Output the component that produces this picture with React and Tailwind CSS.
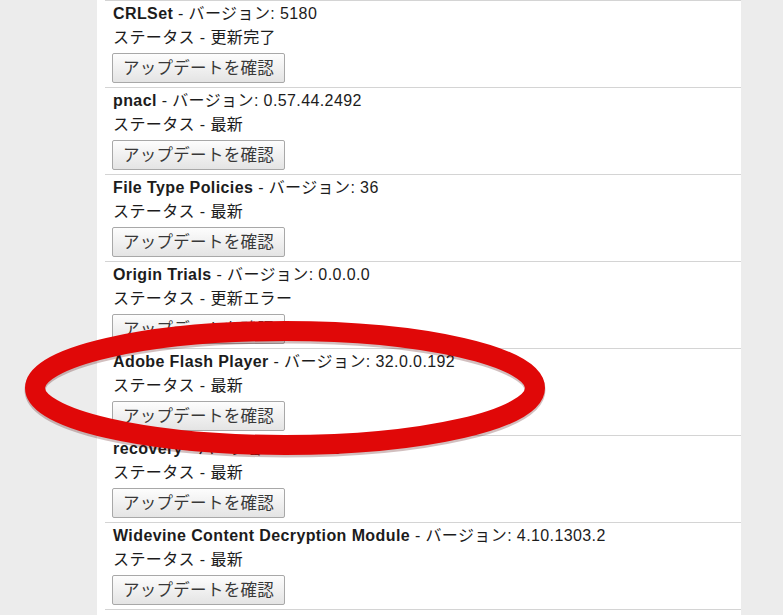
import React from "react";

const components = [
  { name: "CRLSet", version: "5180", status: "更新完了" },
  { name: "pnacl", version: "0.57.44.2492", status: "最新" },
  { name: "File Type Policies", version: "36", status: "最新" },
  { name: "Origin Trials", version: "0.0.0.0", status: "更新エラー" },
  { name: "Adobe Flash Player", version: "32.0.0.192", status: "最新" },
  { name: "recovery", version: "0.0.0.0", status: "最新" },
  { name: "Widevine Content Decryption Module", version: "4.10.1303.2", status: "最新" },
];

const ComponentRow = ({ item }) => (
  <div className="ml-2 border-t border-[#d4d4d4] pt-px pl-2 pb-[4px]">
    <div className="h-[24px] leading-[24px] whitespace-nowrap">
      <span className="font-bold">{item.name}</span>
      <span> - バージョン: {item.version}</span>
    </div>
    <div className="h-[24px] leading-[24px]">ステータス - {item.status}</div>
    {/* Check button */}
    <button className="mt-[3px] h-[30px] w-[173px] -ml-[1px] rounded-[2px] border border-[#a8a8a8] bg-gradient-to-b from-[#fdfdfd] to-[#e4e4e4] text-[16.5px] text-[#383838] tracking-[0.3px]">
      アップデートを確認
    </button>
  </div>
);

export default function App() {
  return (
    <div
      className="relative flex h-[615px] w-[783px] overflow-hidden bg-[#ececec] text-[16px] tracking-[0.4px] text-[#1c1c1c]"
      style={{ fontFamily: '"Liberation Sans", "Noto Sans CJK JP", sans-serif' }}
    >
      <div className="ml-[97px] w-[644px] bg-white">
        {components.map((item) => (
          <ComponentRow key={item.name} item={item} />
        ))}
        <div className="ml-2 border-t border-[#d4d4d4]" />
      </div>

      {/* Red annotation ellipse */}
      <svg
        className="pointer-events-none absolute left-0 top-0"
        width="783"
        height="615"
        viewBox="0 0 783 615"
      >
        <ellipse
          cx="285"
          cy="388"
          rx="250"
          ry="57"
          fill="none"
          stroke="#4a0000"
          strokeOpacity="0.25"
          strokeWidth="21"
          transform="translate(0 2)"
        />
        <ellipse cx="285" cy="388" rx="250" ry="57" fill="none" stroke="#e00808" strokeWidth="20" />
      </svg>
    </div>
  );
}
